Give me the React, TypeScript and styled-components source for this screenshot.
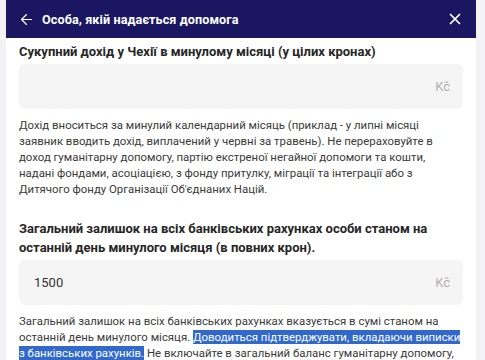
import React from 'react';
import styled, { createGlobalStyle } from 'styled-components';
import { ArrowLeft, X } from 'lucide-react';

const GlobalStyle = createGlobalStyle`
  html, body {
    margin: 0;
    padding: 0;
    background: #f3f3f5;
    font-family: Roboto, "Liberation Sans", sans-serif;
    -webkit-font-smoothing: antialiased;
  }
  ::selection {
    background: #3068cc;
    color: #fff;
  }
`;

const Page = styled.div`
  width: 470px;
  margin-left: 6px;
  background: #fff;
  min-height: 100vh;
`;

const Header = styled.header`
  height: 38px;
  display: flex;
  align-items: center;
  padding: 0 12px 0 12px;
  background: #1b1662;
  color: #fff;
`;

const IconButton = styled.button`
  display: flex;
  align-items: center;
  justify-content: center;
  padding: 0;
  border: 0;
  background: none;
  color: inherit;
  cursor: pointer;
`;

const Title = styled.h1`
  flex: 1;
  margin: 0 0 0 7px;
  font-size: 12.6px;
  font-weight: 700;
  letter-spacing: 0.1px;
`;

const Content = styled.main`
  display: flex;
  flex-direction: column;
  gap: 22px;
  padding: 4px 13px 0;
`;

const Field = styled.section`
  display: flex;
  flex-direction: column;
`;

const Label = styled.label`
  font-size: 13px;
  line-height: 19px;
  font-weight: 700;
  color: #262626;
`;

const InputBox = styled.div`
  margin-top: 3px;
  height: 45px;
  display: flex;
  align-items: center;
  padding: 0 13px;
  border-radius: 6px;
  background: #f5f5f5;
`;

const Input = styled.input`
  flex: 1;
  min-width: 0;
  border: 0;
  outline: none;
  background: transparent;
  font: inherit;
  font-size: 13px;
  color: #333;
`;

const Currency = styled.span`
  font-size: 13px;
  color: #b0b0b0;
`;

const Hint = styled.p`
  margin: 8px 0 0;
  font-size: 11.4px;
  line-height: 16px;
  color: #3a3a3a;
`;

const Selected = styled.span`
  background: #3068cc;
  color: #fff;
`;

const App = () => {
  return (
    <>
      <GlobalStyle />
      <Page>
        <Header>
          <IconButton aria-label="Назад">
            <ArrowLeft size={17} strokeWidth={1.7} />
          </IconButton>
          <Title>Особа, якій надається допомога</Title>
          <IconButton aria-label="Закрити">
            <X size={18} strokeWidth={2.3} />
          </IconButton>
        </Header>
        <Content>
          <Field>
            <Label>Сукупний дохід у Чехії в минулому місяці (у цілих кронах)</Label>
            <InputBox>
              <Input type="text" defaultValue="" />
              <Currency>Kč</Currency>
            </InputBox>
            <Hint>
              Дохід вноситься за минулий календарний місяць (приклад - у липні місяці
              заявник вводить дохід, виплачений у червні за травень). Не перераховуйте в
              доход гуманітарну допомогу, партію екстреної негайної допомоги та кошти,
              надані фондами, асоціацією, з фонду притулку, міграції та інтеграції або з
              Дитячого фонду Організації Об'єднаних Націй.
            </Hint>
          </Field>
          <Field>
            <Label>
              Загальний залишок на всіх банківських рахунках особи станом на останній день
              минулого місяця (в повних крон).
            </Label>
            <InputBox>
              <Input type="text" defaultValue="1500" />
              <Currency>Kč</Currency>
            </InputBox>
            <Hint>
              Загальний залишок на всіх банківських рахунках вказується в сумі станом на
              останній день минулого місяця.{' '}
              <Selected>Доводиться підтверджувати, вкладаючи виписки з банківських рахунків.</Selected>{' '}
              Не включайте в загальний баланс гуманітарну допомогу, партію екстреної
              негайної допомоги та кошти, надані фондами.
            </Hint>
          </Field>
        </Content>
      </Page>
    </>
  );
};

export default App;
